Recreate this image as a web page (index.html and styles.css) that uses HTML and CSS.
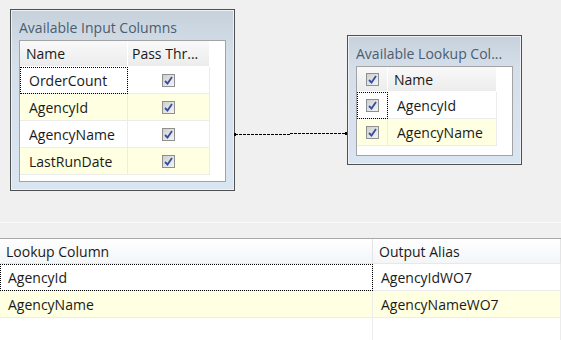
FILE: index.html
```html
<!DOCTYPE html>
<html lang="en">
<head>
    <meta charset="UTF-8">
    <title>Lookup Columns</title>
    <link rel="stylesheet" href="styles.css">
</head>
<body>
    <div class="designer">
        <div class="node node-input">
            <div class="node-title">Available Input Columns</div>
            <div class="list">
                <div class="table input-table">
                    <div class="head">Name</div>
                    <div class="head head-center">Pass Thr...</div>

                    <div class="cell focus">OrderCount</div>
                    <div class="cell center"><span class="check"></span></div>

                    <div class="cell alt">AgencyId</div>
                    <div class="cell center alt"><span class="check"></span></div>

                    <div class="cell">AgencyName</div>
                    <div class="cell center"><span class="check"></span></div>

                    <div class="cell alt">LastRunDate</div>
                    <div class="cell center alt"><span class="check"></span></div>
                </div>
            </div>
        </div>

        <svg class="link" width="114" height="6" viewBox="0 0 114 6">
            <path d="M1 3.5 H56 V2.5 H112" fill="none" stroke="#000" stroke-width="1" stroke-dasharray="3 1"/>
            <rect x="0" y="2" width="2" height="3" fill="#000"/>
            <rect x="111" y="1" width="2" height="3" fill="#000"/>
        </svg>

        <div class="node node-lookup">
            <div class="node-title">Available Lookup Col...</div>
            <div class="list">
                <div class="table lookup-table">
                    <div class="head center"><span class="check"></span></div>
                    <div class="head">Name</div>

                    <div class="cell center focus"><span class="check"></span></div>
                    <div class="cell">AgencyId</div>

                    <div class="cell center alt"><span class="check"></span></div>
                    <div class="cell alt">AgencyName</div>
                </div>
            </div>
        </div>
    </div>

    <div class="splitter"></div>

    <div class="grid">
        <div class="grid-head">Lookup Column</div>
        <div class="grid-head">Output Alias</div>

        <div class="grid-cell focus">AgencyId</div>
        <div class="grid-cell">AgencyIdWO7</div>

        <div class="grid-cell alt">AgencyName</div>
        <div class="grid-cell alt">AgencyNameWO7</div>

        <div class="grid-empty"></div>
        <div class="grid-empty"></div>
    </div>
</body>
</html>
```

FILE: styles.css
```css
body {
    margin: 0;
    width: 561px;
    height: 340px;
    overflow: hidden;
    background-color: #f0f0f0;
    font-family: "Open Sans", "Noto Sans", sans-serif;
    font-size: 14px;
    color: #1a1a1a;
}

/* 上方設計區 */
.designer {
    position: relative;
    height: 222px;
}

.node {
    position: absolute;
    box-sizing: border-box;
    border: 1px solid #505050;
    background: linear-gradient(to bottom, #c7d1dc 0%, #d5dfea 25%, #dae5f2 100%);
    box-shadow: inset 0 0 0 1px #eef2f7;
    padding: 0 8px;
}

.node-input {
    left: 10px;
    top: 9px;
    width: 225px;
    height: 182px;
}

.node-lookup {
    left: 347px;
    top: 35px;
    width: 175px;
    height: 130px;
}

.node-title {
    height: 30px;
    line-height: 36px;
    color: #4b5d70;
    white-space: nowrap;
    overflow: hidden;
}

.list {
    box-sizing: border-box;
    border: 1px solid #a3a3a3;
    background-color: #fff;
}

.node-input .list {
    height: 142px;
}

.node-lookup .list {
    height: 90px;
}

.table {
    display: grid;
    grid-auto-rows: 27px;
}

.input-table {
    grid-template-columns: 108px 82px;
    grid-template-rows: 26px;
}

.lookup-table {
    grid-template-columns: 31px 109px;
    grid-template-rows: 25px;
}

.head {
    display: flex;
    align-items: center;
    padding-left: 6px;
    background: linear-gradient(to bottom, #f9f9f9, #ececec);
    border-right: 1px solid #fff;
    border-bottom: 1px solid #fff;
    white-space: nowrap;
}

.head-center {
    padding-left: 4px;
}

.cell {
    display: flex;
    align-items: center;
    padding-left: 9px;
    border-right: 1px solid #ececec;
    border-bottom: 1px solid #ececec;
    white-space: nowrap;
    box-sizing: border-box;
}

.center {
    justify-content: center;
    padding-left: 0;
}

.alt {
    background-color: #ffffe1;
}

.focus {
    outline: 1px dotted #000;
    outline-offset: -1px;
}

/* 勾選框 */
.check {
    display: inline-block;
    width: 11px;
    height: 11px;
    border: 1px solid #8e8f8f;
    background-color: #e3e3e3;
    background-image:
        url("data:image/svg+xml;utf8,<svg xmlns='http://www.w3.org/2000/svg' width='11' height='11'><path d='M2 6 L4.5 8.5 L9 2' fill='none' stroke='%23354fa0' stroke-width='1.8'/></svg>"),
        linear-gradient(135deg, #cfcfcf, #f4f4f4);
}

.link {
    position: absolute;
    left: 234px;
    top: 131px;
}

.splitter {
    height: 15px;
    border-top: 1px solid #f9f9f9;
    border-bottom: 1px solid #a9a9a9;
}

/* 下方欄位表格 */
.grid {
    display: grid;
    grid-template-columns: 373px 1fr;
    grid-template-rows: 25px 27px 27px 1fr;
    height: 102px;
    background-color: #fff;
}

.grid-head {
    display: flex;
    align-items: center;
    padding-left: 6px;
    background: linear-gradient(to bottom, #ffffff, #f3f5f7);
    border-right: 1px solid #e4e4e4;
    border-bottom: 1px solid #e8e8e8;
}

.grid-cell {
    display: flex;
    align-items: center;
    padding-left: 8px;
    border-right: 1px solid #ececec;
    border-bottom: 1px solid #ececec;
}

.grid-empty {
    border-right: 1px solid #ececec;
}
```
